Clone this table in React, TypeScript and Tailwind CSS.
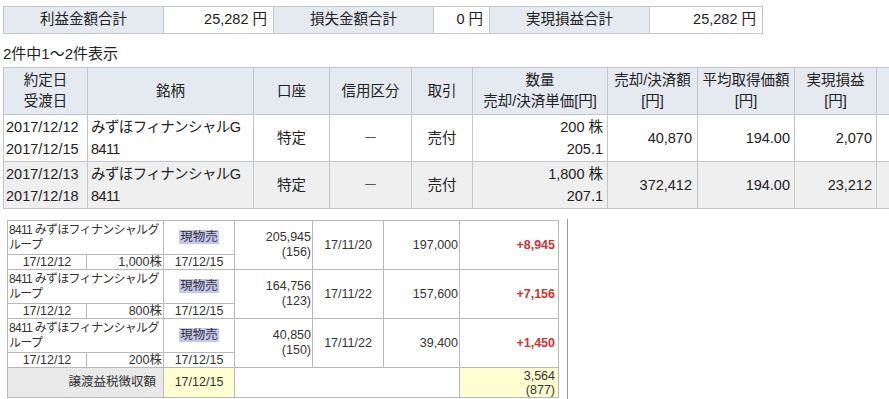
import React from 'react'

const FONT = "font-['Liberation_Sans','Noto_Sans_CJK_JP',sans-serif]"

const summary = [
  { label: '利益金額合計', value: '25,282 円', lw: 'w-[160px]', vw: 'w-[110px]' },
  { label: '損失金額合計', value: '0 円', lw: 'w-[160px]', vw: 'w-[56px]' },
  { label: '実現損益合計', value: '25,282 円', lw: 'w-[160px]', vw: 'w-[113px]' },
]

const rows = [
  { d1: '2017/12/12', d2: '2017/12/15', name: 'みずほフィナンシャルG', code: '8411', qty: '200 株', price: '205.1', amount: '40,870', avg: '194.00', pl: '2,070' },
  { d1: '2017/12/13', d2: '2017/12/18', name: 'みずほフィナンシャルG', code: '8411', qty: '1,800 株', price: '207.1', amount: '372,412', avg: '194.00', pl: '23,212' },
]

const lots = [
  { qty: '1,000株', amount: '205,945', fee: '(156)', buy: '17/11/20', cost: '197,000', pl: '+8,945' },
  { qty: '800株', amount: '164,756', fee: '(123)', buy: '17/11/22', cost: '157,600', pl: '+7,156' },
  { qty: '200株', amount: '40,850', fee: '(150)', buy: '17/11/22', cost: '39,400', pl: '+1,450' },
]

const th = 'border border-[#c3c7cc] bg-[#e5eaf1] font-normal text-center leading-[21px] p-0'
const td = 'border border-[#c3c7cc] p-0 leading-[22px]'
const sb = 'border border-[#b9b9b9] p-0'

export default function App() {
  return (
    <div className={`${FONT} w-[889px] h-[399px] overflow-hidden bg-white text-[#222]`}>
      <div className="pt-[6px] pl-[3px]">
        <table className="table-fixed border-collapse text-[14.5px]">
          <tbody>
            <tr className="h-[27px]">
              {summary.map((s) => (
                <React.Fragment key={s.label}>
                  <td className={`${s.lw} border border-[#c3c7cc] bg-[#e5eaf1] text-center p-0`}>{s.label}</td>
                  <td className={`${s.vw} border border-[#c3c7cc] text-right pr-[6px] p-0`}>{s.value}</td>
                </React.Fragment>
              ))}
            </tr>
          </tbody>
        </table>

        <p className="mt-[10px] mb-[3px] text-[15px] leading-[20px]">2件中1～2件表示</p>

        <table className="table-fixed border-collapse text-[14.5px] w-[920px]">
          <thead>
            <tr className="h-[47px]">
              <th className={`${th} w-[84px]`}>約定日<br />受渡日</th>
              <th className={`${th} w-[166px]`}>銘柄</th>
              <th className={`${th} w-[76px]`}>口座</th>
              <th className={`${th} w-[82px]`}>信用区分</th>
              <th className={`${th} w-[61px]`}>取引</th>
              <th className={`${th} w-[135px]`}>数量<br />売却/決済単価[円]</th>
              <th className={`${th} w-[90px]`}>売却/決済額<br />[円]</th>
              <th className={`${th} w-[97px]`}>平均取得価額<br />[円]</th>
              <th className={`${th} w-[82px]`}>実現損益<br />[円]</th>
              <th className={th}></th>
            </tr>
          </thead>
          <tbody>
            {rows.map((r, i) => (
              <tr key={r.d1} className={`h-[47px] ${i % 2 ? 'bg-[#efefef]' : 'bg-white'}`}>
                <td className={`${td} pl-[2px]`}>{r.d1}<br />{r.d2}</td>
                <td className={`${td} pl-[3px] tracking-[-0.6px]`}>{r.name}<br />{r.code}</td>
                <td className={`${td} text-center`}>特定</td>
                <td className={`${td} text-center text-[#555]`}>－</td>
                <td className={`${td} text-center`}>売付</td>
                <td className={`${td} text-right pr-[4px]`}>{r.qty}<br />{r.price}</td>
                <td className={`${td} text-right pr-[5px]`}>{r.amount}</td>
                <td className={`${td} text-right pr-[4px]`}>{r.avg}</td>
                <td className={`${td} text-right pr-[4px]`}>{r.pl}</td>
                <td className={td}></td>
              </tr>
            ))}
          </tbody>
        </table>

        <div className="mt-[10px] w-[565px] h-[200px] border-r border-[#9a9a9a] pt-px pl-[4px]">
          <table className="table-fixed border-collapse w-[551px] text-[12.5px] text-[#333]">
            <colgroup>
              <col className="w-[79px]" />
              <col className="w-[77px]" />
              <col className="w-[71px]" />
              <col className="w-[78px]" />
              <col className="w-[71px]" />
              <col className="w-[76px]" />
              <col className="w-[99px]" />
            </colgroup>
            <tbody>
              {lots.map((l) => (
                <React.Fragment key={l.amount}>
                  <tr className="h-[34px]">
                    <td colSpan={2} className={`${sb} pl-px align-top leading-[15px] pt-[2px] whitespace-nowrap tracking-[-0.7px] text-[12px]`}>
                      8411 みずほフィナンシャルグ<br />ループ
                    </td>
                    <td className={`${sb} text-center`}>
                      <span className="bg-[#c6c6f0] px-px">現物売</span>
                    </td>
                    <td rowSpan={2} className={`${sb} text-right pr-px leading-[15px]`}>
                      {l.amount}<br />{l.fee}
                    </td>
                    <td rowSpan={2} className={`${sb} text-center`}>{l.buy}</td>
                    <td rowSpan={2} className={`${sb} text-right pr-px`}>{l.cost}</td>
                    <td rowSpan={2} className={`${sb} text-right pr-[3px] text-[#d03333] font-bold`}>{l.pl}</td>
                  </tr>
                  <tr className="h-[15px] leading-[14px]">
                    <td className={`${sb} text-center`}>17/12/12</td>
                    <td className={`${sb} text-right pr-px`}>{l.qty}</td>
                    <td className={`${sb} text-center`}>17/12/15</td>
                  </tr>
                </React.Fragment>
              ))}
              <tr className="h-[30px]">
                <td colSpan={2} className={`${sb} bg-[#e9e9e9] text-right pr-[7px]`}>譲渡益税徴収額</td>
                <td className={`${sb} bg-[#ffffd2] text-center`}>17/12/15</td>
                <td colSpan={3} className={sb}></td>
                <td className={`${sb} bg-[#ffffd2] text-right pr-[3px] leading-[14px]`}>3,564<br />(877)</td>
              </tr>
            </tbody>
          </table>
        </div>
      </div>
    </div>
  )
}
